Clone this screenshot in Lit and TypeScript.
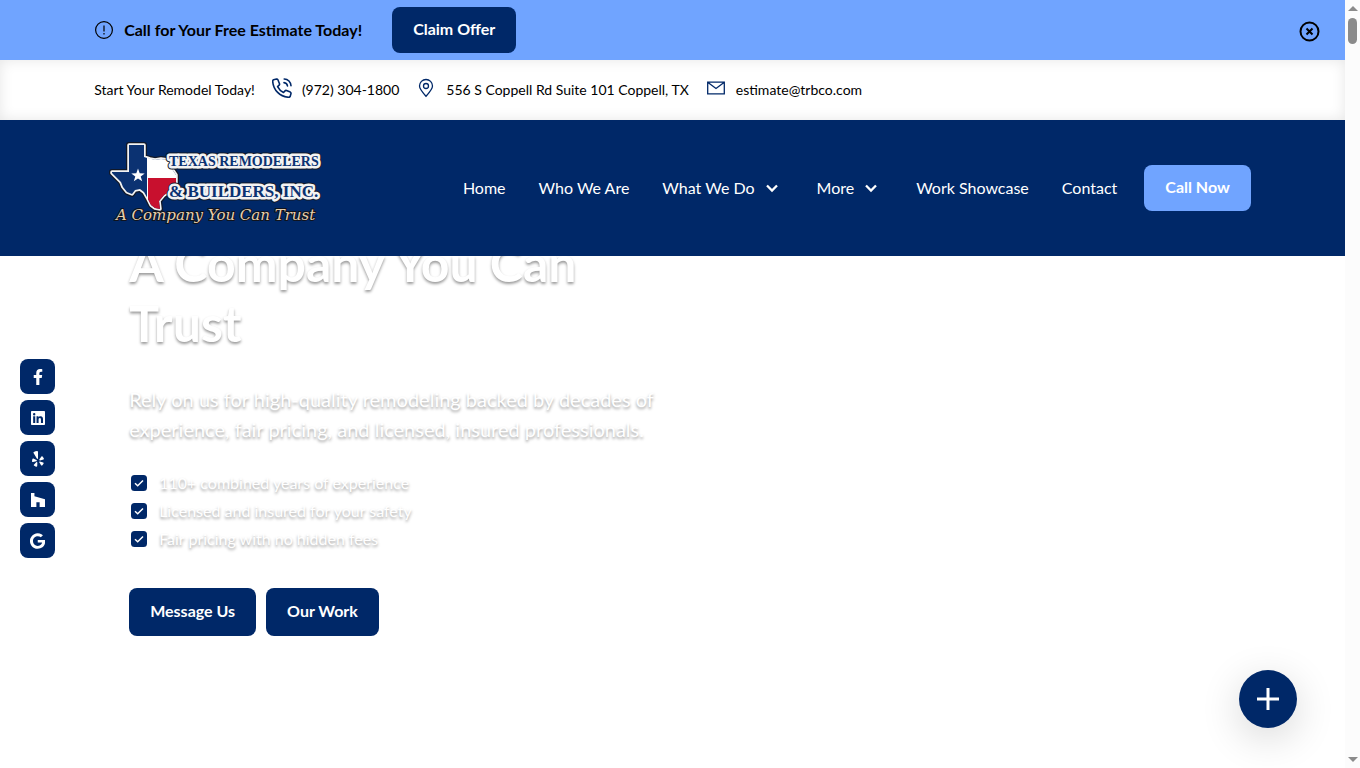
import { LitElement, html, css, svg } from "lit";
import { customElement, state } from "lit/decorators.js";

const socials = [
  { name: "Facebook", box: "0 0 320 512", path: svg`<path d="M279 288l14-93h-89v-60c0-25 12-50 52-50h41V7S260 0 225 0c-73 0-121 44-121 125v70H23v93h81v224h100V288z"/>` },
  { name: "LinkedIn", box: "0 0 448 512", path: svg`<path d="M416 32H32C14 32 0 47 0 64v383c0 18 14 33 32 33h384c18 0 32-15 32-33V64c0-17-14-32-32-32zM135 416H69V202h67v214zm-33-243a38 38 0 1 1 0-77 38 38 0 0 1 0 77zm282 243h-66V312c0-25-1-57-35-57s-40 27-40 55v106h-66V202h64v29h1c9-17 30-35 63-35 67 0 79 44 79 102z"/>` },
  { name: "Yelp", box: "0 0 384 512", path: svg`<path d="M42 240l99 48c19 10 17 35-3 40l-107 27c-14 3-27-7-28-21-2-27 1-53 10-78 5-14 17-22 29-16zM86 479c15 12 34 21 54 25 14 2 27-8 27-22l4-110c1-20-23-31-37-16L60 438c-10 11-8 30 26 41zM232 363l58 93c8 12 24 14 35 5 19-16 35-36 46-58 6-13-1-27-14-32l-104-34c-19-6-32 12-21 26zM379 237c-11-24-25-45-43-63-10-9-26-8-34 4l-64 89c-12 16 3 38 22 33l105-29c15-4 21-18 14-34zM62 30c-14 7-19 21-12 34l104 179c10 18 38 11 38-10V28c0-17-14-29-30-28-35 3-68 13-100 30z"/>` },
  { name: "Houzz", box: "0 0 448 512", path: svg`<path d="M276 481V328H172v153H0V32h110v103l338 97v249z"/>` },
  { name: "Google", box: "0 0 488 512", path: svg`<path d="M488 262c0 142-97 242-240 242A248 248 0 1 1 414 74l-67 65C259 54 95 118 95 256c0 86 69 156 153 156 98 0 135-70 140-107H248v-85h236c3 13 4 25 4 42z"/>` },
];

const chevron = html`<svg class="chevron" viewBox="0 0 14 14" aria-hidden="true"><path d="M2 4.5l5 5 5-5" fill="none" stroke="currentColor" stroke-width="2.3"/></svg>`;

@customElement("brand-logo")
class BrandLogo extends LitElement {
  static styles = css`
    :host { display: block; width: 216px; }
    .art { display: block; width: 100%; overflow: visible; }
    .word { font-family: "Liberation Serif", serif; font-weight: 700; fill: #0b3272; stroke-linejoin: round; paint-order: stroke; }
    .dark { stroke: #111827; stroke-width: 7; }
    .light { stroke: #f3f3f3; stroke-width: 5; }
    .top { font-size: 14px; }
    .bottom { font-size: 17px; }
    .tag { font-family: "DejaVu Serif", serif; font-style: italic; font-size: 15px; fill: #e6cfae; stroke: #10131c; stroke-width: 2; paint-order: stroke; }
  `;
  render() {
    const words = (c: string) => svg`
      <text class="word top ${c}" x="59" y="25">TEXAS REMODELERS</text>
      <text class="word bottom ${c}" x="59" y="56">&amp; BUILDERS, INC.</text>`;
    const outline = "M19 4h15v12l6 2 5 1 6-1 7 1 4 9 4 6v8l-6 8-6 4-5 6 1 8-5-1-4-3-3-6-4-7-4-3-5 1-3 4-5-2-4-5-2-5-9-9v-1h17z";
    return html`<svg class="art" viewBox="0 0 216 86" role="img" aria-label="Texas Remodelers and Builders">
      <path d=${outline} fill="#0b3272" stroke="#111827" stroke-width="6" stroke-linejoin="round"/>
      <path d=${outline} fill="#0b3272" stroke="#f3f3f3" stroke-width="3.5" stroke-linejoin="round"/>
      <path d=${outline} fill="#0b3272"/>
      <path d="M38 17l7 2 6-1 7 1 4 9 4 6v3H38z" fill="#fff"/>
      <path d="M38 37h28v5l-6 8-6 4-5 6 1 8-5-1-4-3-3-6z" fill="#c8102e"/>
      <path d="M37.500 17v43" stroke="#fff" stroke-width="1"/>
      <path d="M28 27.500l1.700 4.800 5 .100-4 3 1.500 4.900-4.200-2.900-4.200 2.900 1.500-4.900-4-3 5-.100z" fill="#fff"/>
      ${words("dark")}${words("light")}
      <text class="tag" x="6" y="79">A Company You Can Trust</text>
    </svg>`;
  }
}

@customElement("app-root")
class AppRoot extends LitElement {
  @state() private offer = true;

  static styles = css`
    :host { display: grid; grid-template-columns: minmax(0, 1fr) 15px; height: 100vh; overflow: hidden; background: #fff; color: #000; font: 16px/24px Lato, sans-serif; --navy: #002868; --sky: #70a4ff; }
    * { box-sizing: border-box; }
    a { color: inherit; text-decoration: none; }
    button { font: inherit; border: 0; cursor: pointer; }
    svg { display: block; flex: none; }
    .page { display: flex; flex-direction: column; min-height: 0; }
    .wrap { width: 86%; margin: 0 auto; display: flex; align-items: center; }
    .banner { position: relative; background: var(--sky); height: 60px; display: flex; flex: none; font-weight: 700; }
    .banner .label { margin: 0 30px 0 10px; }
    .banner .icon { width: 20px; }
    .btn { display: inline-flex; align-items: center; height: 46px; padding: 0 21px 2px; border-radius: 8px; background: var(--navy); color: #fff; font-weight: 700; white-space: nowrap; }
    .btn.sky { background: var(--sky); }
    .btn.tall { height: 48px; }
    .close { position: absolute; right: 25px; top: 21px; padding: 0; background: none; color: #000; }
    .close svg { width: 21px; }
    .contact { height: 60px; flex: none; display: flex; font-size: 14px; box-shadow: inset 0 0 14px rgba(0, 0, 0, .1); }
    .contact .wrap { gap: 17px; }
    .contact .item { display: flex; align-items: center; gap: 10px; }
    .contact .icon { width: 20px; color: var(--navy); margin-bottom: 4px; }
    .header { position: relative; z-index: 1; height: 136px; flex: none; display: flex; background: var(--navy); color: #fff; }
    .header .wrap { justify-content: space-between; }
    .logo { padding: 0 0 8px 16px; }
    .nav { display: flex; align-items: center; gap: 33px; white-space: nowrap; }
    .nav .more { display: flex; align-items: center; gap: 10px; padding-right: 5px; }
    .nav .btn { margin-left: -6px; }
    .chevron { width: 14px; }
    .hero { flex: 1; min-height: 0; display: flex; flex-direction: column; justify-content: flex-end; padding: 0 0 132px; }
    .copy { width: 86%; margin: 0 auto; padding-left: 35px; color: #fff; text-shadow: 0 2px 3px rgba(0, 0, 0, .4); }
    .title { max-width: 540px; margin: 0 0 31px; font-size: 50px; line-height: 60px; font-weight: 700; }
    .lead { max-width: 540px; margin: 0 0 25px; font-size: 20px; line-height: 30px; }
    .list { list-style: none; margin: 0 0 35px; padding: 0 0 0 2px; line-height: 28px; }
    .list .row { display: flex; align-items: center; gap: 12px; }
    .list .tick { width: 16px; }
    .actions { display: flex; gap: 10px; text-shadow: none; }
    .social { position: fixed; left: 20px; top: 359px; display: grid; gap: 6px; }
    .social .link { display: grid; place-items: center; width: 35px; height: 35px; border-radius: 8px; background: var(--navy); }
    .social .glyph { height: 16px; fill: #fff; }
    .fab { position: fixed; right: 63px; bottom: 40px; width: 58px; height: 58px; padding: 0; display: grid; place-items: center; border-radius: 50%; background: var(--navy); box-shadow: 0 10px 40px rgba(0, 0, 0, .16); }
    .fab svg { width: 24px; }
    .bar { display: flex; flex-direction: column; align-items: center; justify-content: space-between; background: #fcfcfc; padding: 6px 0; }
    .bar .upper { display: grid; gap: 7px; justify-items: center; }
    .bar .arrow { width: 10px; fill: #8b8b8b; }
    .bar .thumb { width: 9px; height: 26px; border-radius: 5px; background: #8b8b8b; }
  `;

  render() {
    return html`
      <div class="page">
        ${this.offer ? html`<div class="banner">
          <div class="wrap">
            <svg class="icon" viewBox="0 0 20 20" fill="none" stroke="#000" stroke-width="1.200" aria-hidden="true"><circle cx="10" cy="10" r="8.400"/><path d="M10 5.500v6M10 13v1.600"/></svg>
            <span class="label">Call for Your Free Estimate Today!</span>
            <a class="btn" href="#offer">Claim Offer</a>
          </div>
          <button class="close" aria-label="Close" @click=${() => (this.offer = false)}>
            <svg viewBox="0 0 21 21" fill="none" stroke="currentColor" stroke-width="2"><circle cx="10.500" cy="10.500" r="9"/><path d="M7.500 7.500l6 6m0-6l-6 6"/></svg>
          </button>
        </div>` : null}
        <div class="contact">
          <div class="wrap">
            <span>Start Your Remodel Today!</span>
            <a class="item" href="tel:9723041800">
              <svg class="icon" viewBox="0 0 20 20" fill="none" stroke="currentColor" stroke-width="1.600" stroke-linejoin="round" stroke-linecap="round"><path d="M4.500 1L1.600 1.800Q.700 2.200.700 3.200C1.200 12 8 18.800 16.800 19.300q1 0 1.400-.900l.800-2.900q.100-1-.700-1.400l-3.800-1.600q-.900-.300-1.500.400L11.500 14.500C9 13.300 6.900 11.200 5.600 8.600L7.100 7.200q.700-.700.400-1.500L5.900 1.800Q5.500.900 4.500 1zM12.200 1a7 7 0 0 1 6.800 6.800M12 4.600a4 4 0 0 1 3.500 3.400"/></svg>
              <span>(972) 304-1800</span>
            </a>
            <a class="item" href="#map">
              <svg class="icon" viewBox="0 0 20 20" fill="none" stroke="currentColor" stroke-width="1.300"><path d="M10 18.300C6 13.800 3.500 11 3.500 8a6.500 6.500 0 0 1 13 0c0 3-2.500 5.800-6.500 10.300z"/><circle cx="10" cy="8" r="2.500"/></svg>
              <span>556 S Coppell Rd Suite 101 Coppell, TX</span>
            </a>
            <a class="item" href="mailto:estimate@trbco.com">
              <svg class="icon" viewBox="0 0 20 20" fill="none" stroke="currentColor" stroke-width="1.300"><path d="M1.700 4.200h16.600v11.600H1.700zM2 4.500l8 6 8-6"/></svg>
              <span>estimate@trbco.com</span>
            </a>
          </div>
        </div>
        <header class="header">
          <div class="wrap">
            <a class="logo" href="#home"><brand-logo></brand-logo></a>
            <nav class="nav">
              <a href="#home">Home</a>
              <a href="#about">Who We Are</a>
              <a class="more" href="#services">What We Do ${chevron}</a>
              <a class="more" href="#more">More ${chevron}</a>
              <a href="#work">Work Showcase</a>
              <a href="#contact">Contact</a>
              <a class="btn sky" href="tel:9723041800">Call Now</a>
            </nav>
          </div>
        </header>
        <main class="hero">
          <div class="copy">
            <h1 class="title">A Company You Can Trust</h1>
            <p class="lead">Rely on us for high-quality remodeling backed by decades of experience, fair pricing, and licensed, insured professionals.</p>
            <ul class="list">
              ${["110+ combined years of experience", "Licensed and insured for your safety", "Fair pricing with no hidden fees"].map((t) => html`
                <li class="row"><svg class="tick" viewBox="0 0 16 16" aria-hidden="true"><rect width="16" height="16" rx="3.500" fill="#002868"/><path d="M4 8.200l2.700 2.600L12 5.500" fill="none" stroke="#fff" stroke-width="1.500"/></svg><span>${t}</span></li>`)}
            </ul>
            <div class="actions">
              <a class="btn tall" href="#message">Message Us</a>
              <a class="btn tall" href="#work">Our Work</a>
            </div>
          </div>
        </main>
      </div>
      <div class="bar" aria-hidden="true">
        <div class="upper"><svg class="arrow" viewBox="0 0 10 5"><path d="M0 5l5-5 5 5z"/></svg><div class="thumb"></div></div>
        <svg class="arrow" viewBox="0 0 10 5"><path d="M0 0l5 5 5-5z"/></svg>
      </div>
      <div class="social">
        ${socials.map((s) => html`<a class="link" href="#social" aria-label=${s.name}><svg class="glyph" viewBox=${s.box}>${s.path}</svg></a>`)}
      </div>
      <button class="fab" aria-label="Open menu"><svg viewBox="0 0 24 24" fill="none" stroke="#fff" stroke-width="3"><path d="M12 1v22M1 12h22"/></svg></button>
    `;
  }
}
